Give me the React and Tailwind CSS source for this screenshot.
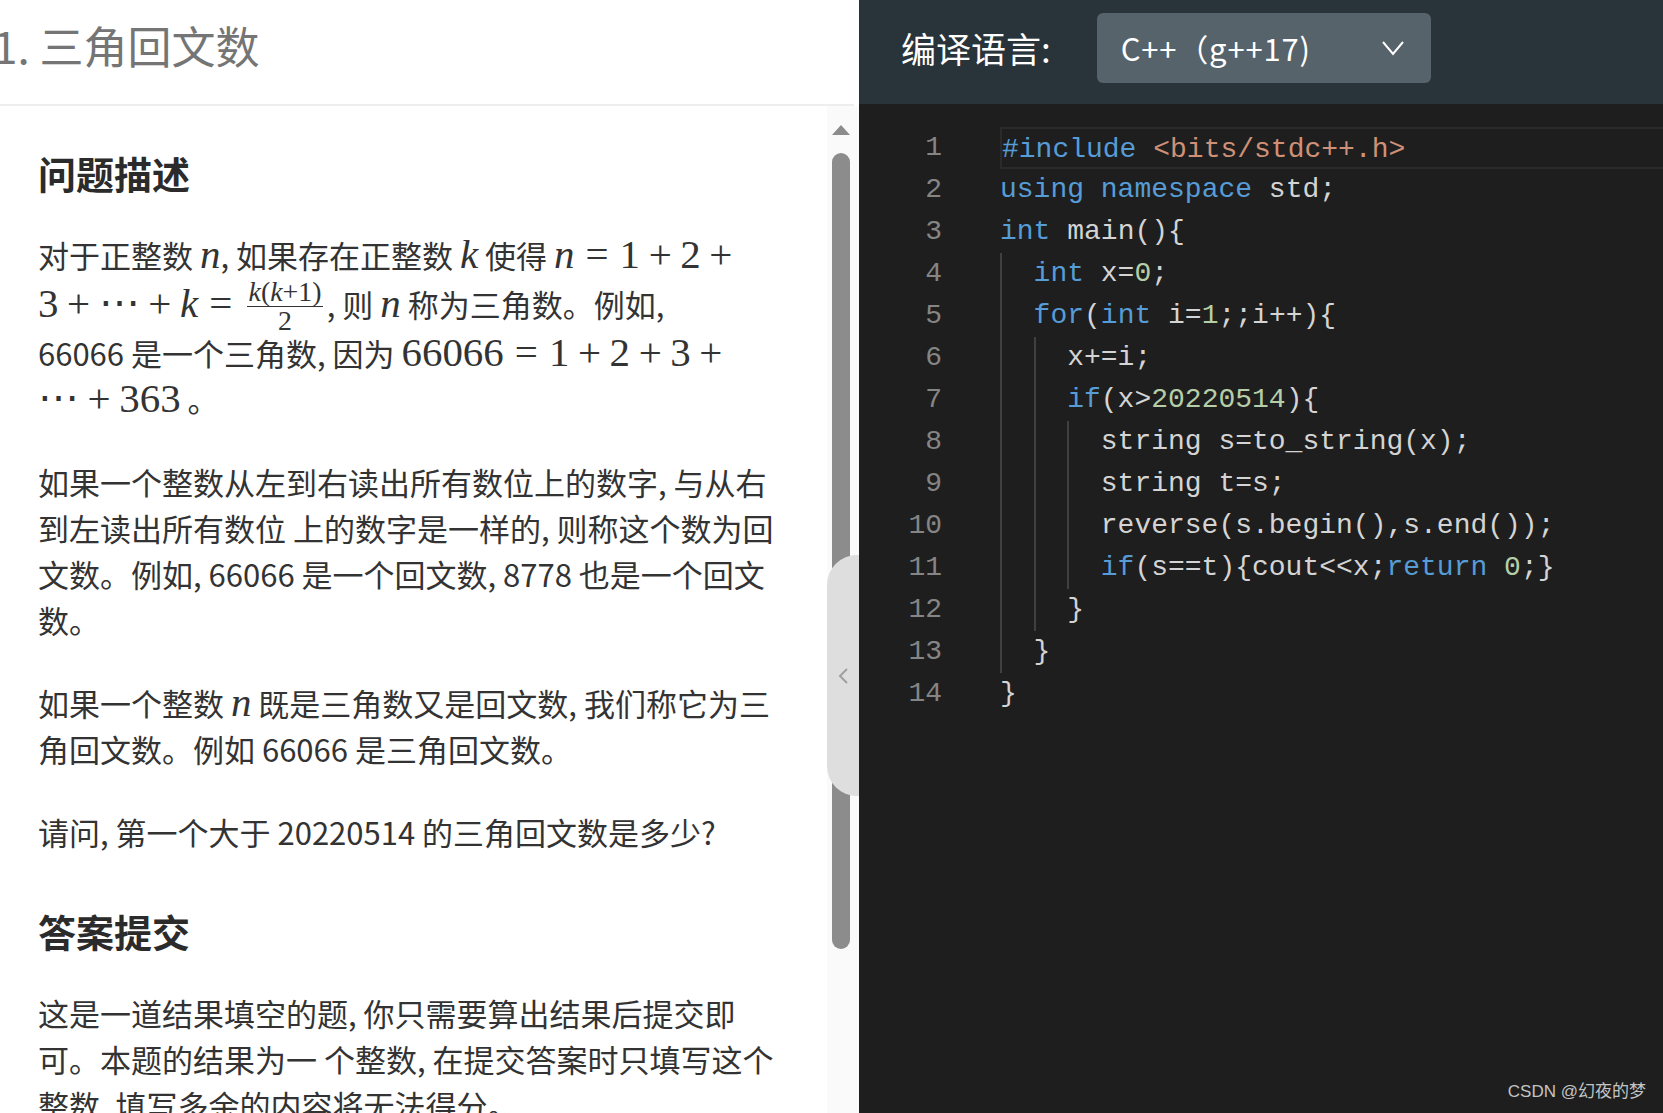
import React from "react";

const K = "text-[#569cd6]";
const S = "text-[#ce9178]";
const N = "text-[#b5cea8]";

const codeLines = [
  [0, [[K, "#include"], [null, " "], [S, "<bits/stdc++.h>"]]],
  [0, [[K, "using namespace"], [null, " std;"]]],
  [0, [[K, "int"], [null, " main(){"]]],
  [1, [[K, "int"], [null, " x="], [N, "0"], [null, ";"]]],
  [1, [[K, "for"], [null, "("], [K, "int"], [null, " i="], [N, "1"], [null, ";;i++){"]]],
  [2, [[null, "x+=i;"]]],
  [2, [[K, "if"], [null, "(x>"], [N, "20220514"], [null, "){"]]],
  [3, [[null, "string s=to_string(x);"]]],
  [3, [[null, "string t=s;"]]],
  [3, [[null, "reverse(s.begin(),s.end());"]]],
  [3, [[K, "if"], [null, "(s==t){cout<<x;"], [K, "return"], [null, " "], [N, "0"], [null, ";}"]]],
  [2, [[null, "}"]]],
  [1, [[null, "}"]]],
  [0, [[null, "}"]]],
];

const M = ({ children }) => (
  <span className="font-['Liberation_Serif','DejaVu_Serif',serif] text-[1.32em] leading-none whitespace-nowrap">
    {children}
  </span>
);
const V = ({ children }) => <i className="italic">{children}</i>;
const Rel = ({ children }) => <span className="mx-[0.27em]">{children}</span>;
const Bin = ({ children }) => <span className="mx-[0.21em]">{children}</span>;

const Frac = () => (
  <span className="inline-flex flex-col items-center align-middle mx-[0.12em] -my-[20px] -translate-y-[1px] text-[0.68em] leading-[0.86]">
    <span className="px-[2px] pb-[2px]">
      <V>k</V>(<V>k</V>+1)
    </span>
    <span className="self-stretch border-t border-[#333]" />
    <span className="pt-[2px]">2</span>
  </span>
);

const ProblemPanel = () => (
  <div className="w-[859px] shrink-0 flex flex-col bg-white">
    <header className="h-[106px] shrink-0 flex items-center pb-[14px] border-b-2 border-[#eeeeee] mr-[5px]">
      <h1 className="-ml-[7px] text-[44px] text-[#757575] font-normal whitespace-nowrap">1. 三角回文数</h1>
    </header>
    <div className="flex-1 flex min-h-0">
      <div className="flex-1 overflow-hidden pl-[38px] pt-[42px] text-[#333333]">
        <h2 className="text-[38px] leading-[50px] font-bold text-[#2b2b2b] mb-[34px]">问题描述</h2>
        <div className="text-[31px] leading-[46px] mb-[37px] whitespace-nowrap">
          <div>
            对于正整数 <M><V>n</V></M>, 如果存在正整数 <M><V>k</V></M> 使得 <M><V>n</V><Rel>=</Rel>1<Bin>+</Bin>2<Bin>+</Bin></M>
          </div>
          <div className="leading-[52px]">
            <M>3<Bin>+</Bin>⋯<Bin>+</Bin><V>k</V><Rel>=</Rel><Frac /></M>, 则 <M><V>n</V></M> 称为三角数。例如,
          </div>
          <div>
            66066 是一个三角数, 因为 <M>66066<Rel>=</Rel>1<Bin>+</Bin>2<Bin>+</Bin>3<Bin>+</Bin></M>
          </div>
          <div>
            <M>⋯<Bin>+</Bin>363</M> 。
          </div>
        </div>
        <p className="text-[31px] leading-[46px] mb-[37px] whitespace-nowrap">
          如果一个整数从左到右读出所有数位上的数字, 与从右
          <br />
          到左读出所有数位 上的数字是一样的, 则称这个数为回
          <br />
          文数。例如, 66066 是一个回文数, 8778 也是一个回文
          <br />
          数。
        </p>
        <p className="text-[31px] leading-[46px] mb-[37px] whitespace-nowrap">
          如果一个整数 <M><V>n</V></M> 既是三角数又是回文数, 我们称它为三
          <br />
          角回文数。例如 66066 是三角回文数。
        </p>
        <p className="text-[31px] leading-[46px] mb-[37px] whitespace-nowrap">
          请问, 第一个大于 20220514 的三角回文数是多少?
        </p>
        <h2 className="pt-[14px] text-[38px] leading-[50px] font-bold text-[#2b2b2b] mb-[34px]">答案提交</h2>
        <p className="text-[31px] leading-[46px] whitespace-nowrap">
          这是一道结果填空的题, 你只需要算出结果后提交即
          <br />
          可。本题的结果为一 个整数, 在提交答案时只填写这个
          <br />
          整数, 填写多余的内容将无法得分。
        </p>
      </div>
      <div className="relative w-[32px] shrink-0 bg-[#fafafa] flex flex-col items-center pt-[19px]">
        <svg width="18" height="10" viewBox="0 0 18 10" className="ml-[-4px]">
          <polygon points="9,0 18,10 0,10" fill="#8c8c8c" />
        </svg>
        <div className="mt-[18px] ml-[-4px] w-[18px] h-[796px] rounded-full bg-[#8c8c8c]" />
        <div className="absolute left-0 top-[449px] w-[32px] h-[241px] rounded-l-[30px] bg-[#dedede] flex items-center justify-center">
          <svg width="12" height="18" viewBox="0 0 12 18">
            <polyline points="10,2 3,9 10,16" fill="none" stroke="#a0a0a0" strokeWidth="2" />
          </svg>
        </div>
      </div>
    </div>
  </div>
);

const CodePanel = () => (
  <div className="flex-1 flex flex-col bg-[#1e1e1e] min-w-0">
    <header className="h-[104px] shrink-0 bg-[#29333a] flex items-center pb-[8px] pl-[42px] text-white">
      <span className="text-[35px] whitespace-nowrap">编译语言:</span>
      <div className="ml-[46px] w-[334px] h-[70px] rounded-md bg-[#56636b] flex items-center justify-between pl-[24px] pr-[27px]">
        <span className="text-[31px] tracking-[0.8px] whitespace-nowrap">C++（g++17)</span>
        <svg width="22" height="16" viewBox="0 0 22 16">
          <polyline points="1,2 11,14 21,2" fill="none" stroke="#ffffff" strokeWidth="2" />
        </svg>
      </div>
    </header>
    <div className="pt-[23px] font-['Liberation_Mono','DejaVu_Sans_Mono',monospace] text-[28px] text-[#d4d4d4]">
      {codeLines.map(([level, tokens], i) => (
        <div key={i} className="flex h-[42px]">
          <span className="w-[83px] shrink-0 text-right leading-[42px] text-[#858585]">{i + 1}</span>
          <div
            className={
              "ml-[58px] flex-1 flex leading-[42px] whitespace-pre " +
              (i === 0 ? "border-y-2 border-l-2 border-[#2a2a2a] leading-[38px]" : "")
            }
          >
            {Array.from({ length: level }).map((_, g) => (
              <span key={g} className="w-[2ch] shrink-0 border-l-2 border-[#404040]" />
            ))}
            <span>
              {tokens.map(([cls, t], j) => (
                <span key={j} className={cls || ""}>
                  {t}
                </span>
              ))}
            </span>
          </div>
        </div>
      ))}
    </div>
  </div>
);

export default function App() {
  return (
    <div className="relative w-[1663px] h-[1113px] flex overflow-hidden font-['Noto_Sans_CJK_SC',sans-serif]">
      <ProblemPanel />
      <CodePanel />
      <span className="absolute right-[17px] bottom-[9px] text-[17px] text-[#c4c4c4] font-['Liberation_Sans','Noto_Sans_CJK_SC',sans-serif]">
        CSDN @幻夜的梦
      </span>
    </div>
  );
}
